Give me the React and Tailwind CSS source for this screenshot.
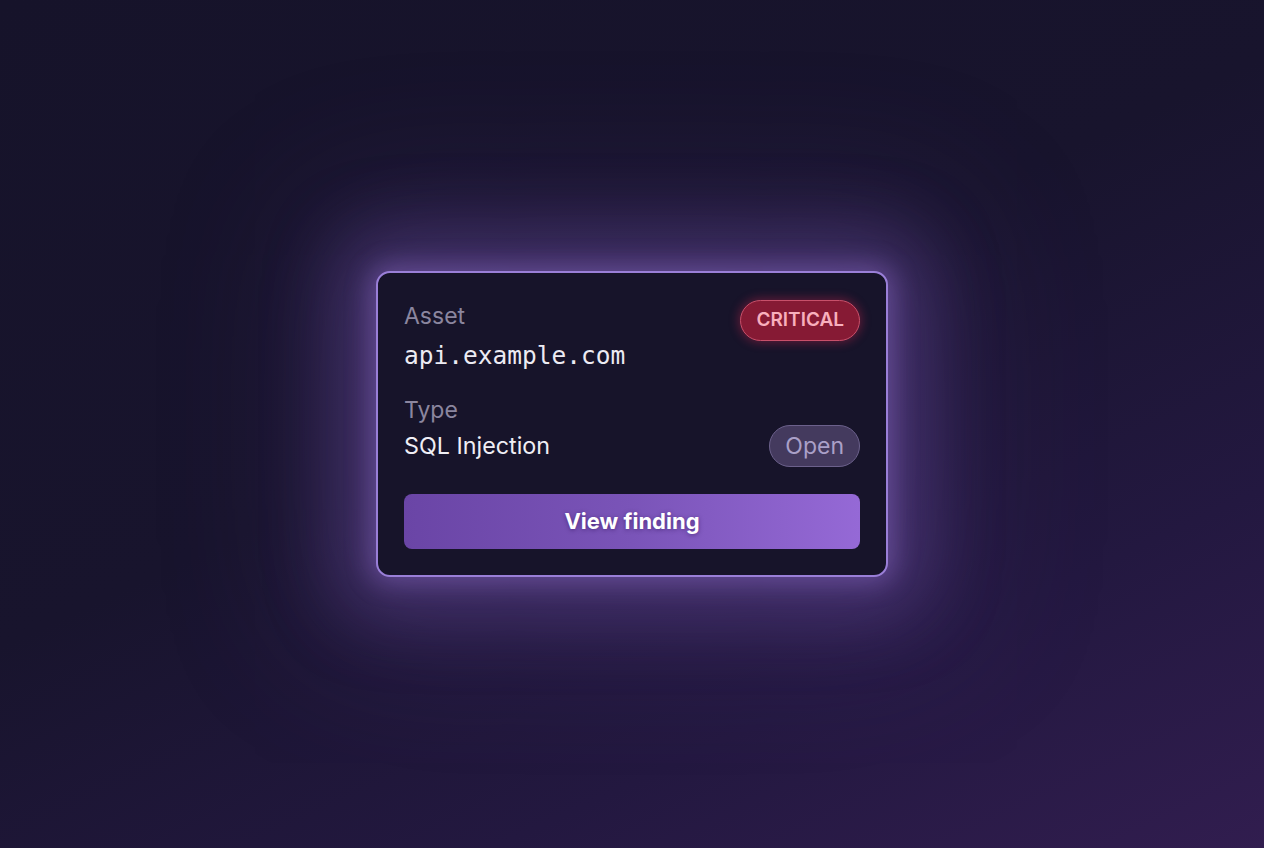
export default function App() {
  return (
    <div className="min-h-screen w-full flex items-center justify-center bg-[linear-gradient(155deg,#16132a_0%,#18142d_45%,#231840_75%,#311d4f_100%)] font-['Inter',sans-serif]">
      <div className="w-[512px] rounded-[14px] border-2 border-[#9a7fd8] bg-[#17142a] px-[26px] pt-[28px] pb-[26px] shadow-[0_0_24px_6px_rgba(150,115,210,0.4),0_0_70px_40px_rgba(110,80,165,0.42),0_0_150px_70px_rgba(95,65,150,0.22)]">
        {/* asset row */}
        <div className="flex items-start justify-between">
          <div>
            <div className="text-[23px] leading-[30px] text-[#8b869f]">Asset</div>
            <div className="mt-[10px] font-['DejaVu_Sans_Mono',monospace] text-[24.5px] leading-[30px] text-[#ecebf3]">
              api.example.com
            </div>
          </div>
          <span className="mt-[-1px] inline-flex h-[41px] items-center rounded-full border border-[#c8506a] bg-[#861a34] px-[15px] text-[19px] font-semibold text-[#f8afbd] shadow-[0_0_10px_2px_rgba(220,40,80,0.35)]">
            CRITICAL
          </span>
        </div>

        {/* type row */}
        <div className="mt-[24px]">
          <div className="text-[23px] leading-[30px] text-[#8b869f]">Type</div>
          <div className="flex items-center justify-between">
            <div className="text-[23.3px] leading-[30px] text-[#efeef5]">SQL Injection</div>
            <span className="inline-flex h-[42px] items-center rounded-full border border-[#6c618c] bg-[#443a5e] px-[15px] text-[23px] text-[#aaa0c8]">
              Open
            </span>
          </div>
        </div>

        <button className="mt-[27px] flex h-[55px] w-full items-center justify-center rounded-[8px] bg-[linear-gradient(90deg,#6a45a6_0%,#7a54b8_50%,#9569d6_100%)] text-[22px] font-bold text-white [text-shadow:0_1px_4px_rgba(40,10,80,0.5)]">
          View finding
        </button>
      </div>
    </div>
  );
}
